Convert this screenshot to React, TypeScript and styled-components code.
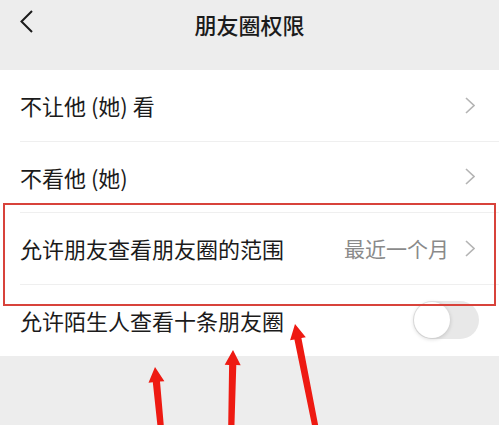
import React from "react";
import styled, { createGlobalStyle } from "styled-components";

const GlobalStyle = createGlobalStyle`
  html, body {
    margin: 0;
    padding: 0;
    background: #ededed;
  }
  body {
    font-family: "Noto Sans CJK SC", "Noto Sans", sans-serif;
    color: #1b1b1b;
  }
`;

const Screen = styled.div`
  position: relative;
  width: 499px;
  height: 425px;
  overflow: hidden;
  background: #ededed;
`;

const NavBar = styled.header`
  position: relative;
  height: 48px;
  display: flex;
  align-items: center;
  justify-content: center;
  margin-bottom: 22px;

  > h1 {
    margin: 0;
    font-size: 22px;
    font-weight: 500;
    letter-spacing: 0;
  }
`;

const BackBtn = styled.span`
  position: absolute;
  left: 18px;
  top: 9px;
  width: 18px;
  height: 26px;
  display: flex;
`;

const List = styled.div`
  position: relative;
  background: #fff;
`;

const Row = styled.div<{ $last?: boolean }>`
  height: 71.5px;
  padding-left: 20px;
  display: flex;

  > div {
    flex: 1;
    display: flex;
    align-items: center;
    justify-content: space-between;
    padding-right: ${(p) => (p.$last ? "20px" : "24px")};
    border-bottom: ${(p) => (p.$last ? "none" : "1px solid #efefef")};
  }
`;

const Label = styled.span`
  font-size: 22px;
  line-height: 1;
  color: #1b1b1b;
`;

const Right = styled.span`
  display: flex;
  align-items: center;
  gap: 16px;
  font-size: 21px;
  color: #8a8a8a;
`;

const Toggle = styled.span`
  position: relative;
  width: 66px;
  height: 38px;
  border-radius: 19px;
  background: #e8e8e8;

  &::after {
    content: "";
    position: absolute;
    left: 1px;
    top: 1px;
    width: 36px;
    height: 36px;
    border-radius: 50%;
    background: #fff;
    box-shadow: 0 1px 4px rgba(0, 0, 0, 0.18);
  }
`;

const Highlight = styled.div`
  position: absolute;
  left: 3px;
  top: 133px;
  width: 493px;
  height: 103px;
  box-sizing: border-box;
  border: 2px solid #d8433b;
  pointer-events: none;
`;

const Arrows = styled.svg`
  position: absolute;
  left: 0;
  top: 0;
  pointer-events: none;
`;

const Chevron = () => (
  <svg width="10" height="17" viewBox="0 0 10 17">
    <polyline points="1,1 9,8.5 1,16" fill="none" stroke="#b4b4b4" strokeWidth="1.6" />
  </svg>
);

// 箭头: 尖端 (tx,ty), 尾部 (bx,by)
const arrow = (tx: number, ty: number, bx: number, by: number) => {
  const dx = bx - tx;
  const dy = by - ty;
  const len = Math.hypot(dx, dy);
  const ux = dx / len;
  const uy = dy / len;
  const nx = -uy;
  const ny = ux;
  const hl = 15;
  const hw = 8;
  const sw0 = 3.6;
  const sw1 = 3;
  const hx = tx + ux * hl;
  const hy = ty + uy * hl;
  const pts = [
    [tx, ty],
    [hx + nx * hw, hy + ny * hw],
    [hx + nx * sw0, hy + ny * sw0],
    [bx + nx * sw1, by + ny * sw1],
    [bx - nx * sw1, by - ny * sw1],
    [hx - nx * sw0, hy - ny * sw0],
    [hx - nx * hw, hy - ny * hw],
  ];
  return pts.map((p) => p.map((v) => v.toFixed(1)).join(",")).join(" ");
};

const rows = [
  { label: "不让他 (她) 看" },
  { label: "不看他 (她)" },
  { label: "允许朋友查看朋友圈的范围", value: "最近一个月" },
];

export default function App() {
  return (
    <>
      <GlobalStyle />
      <Screen>
        <NavBar>
          <BackBtn>
            <svg width="18" height="26" viewBox="0 0 18 26">
              <polyline points="14,2 3.5,12.5 14,23" fill="none" stroke="#1b1b1b" strokeWidth="2" />
            </svg>
          </BackBtn>
          <h1>朋友圈权限</h1>
        </NavBar>
        <List>
          {rows.map((r) => (
            <Row key={r.label}>
              <div>
                <Label>{r.label}</Label>
                <Right>
                  {r.value}
                  <Chevron />
                </Right>
              </div>
            </Row>
          ))}
          <Row $last>
            <div>
              <Label>允许陌生人查看十条朋友圈</Label>
              <Toggle />
            </div>
          </Row>
          <Highlight />
        </List>
        <Arrows width="499" height="425" viewBox="0 0 499 425">
          <g fill="#ee1a12">
            <polygon points={arrow(155, 367, 162, 440)} />
            <polygon points={arrow(233, 350, 231, 440)} />
            <polygon points={arrow(295, 324, 318, 440)} />
          </g>
        </Arrows>
      </Screen>
    </>
  );
}
